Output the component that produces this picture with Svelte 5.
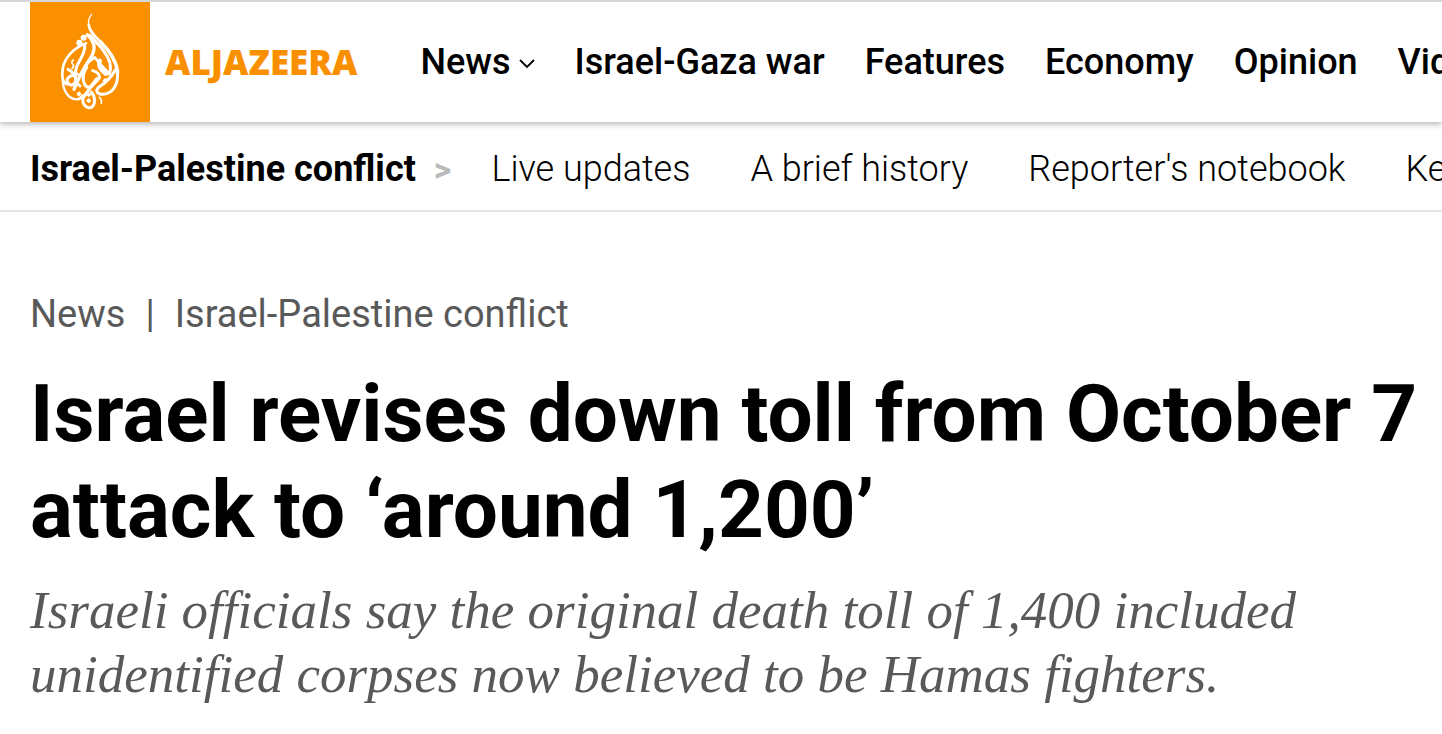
<script>
  const sections = ['Israel-Gaza war', 'Features', 'Economy', 'Opinion', 'Video'];
  const topics = ['Live updates', 'A brief history', "Reporter's notebook", 'Key'];
</script>

<header class="site-header">
  <a class="brand" href="#home" aria-label="Al Jazeera">
    <svg class="emblem" viewBox="-60 6 360 360" aria-hidden="true">
      <g fill="none" stroke="#fff" stroke-linecap="round" stroke-linejoin="round">
        <path stroke-width="4" d="M125 43Q113 56 116 76" />
        <path stroke-width="8" d="M116 74C118 96 136 108 154 128" />
        <path stroke-width="11" d="M152 126C180 154 199 182 203 216" />
        <path stroke-width="9" d="M202 214C206 252 190 280 160 283C142 284 134 272 146 262C168 248 186 228 196 210" />
        <path stroke-width="8" d="M108 130C76 142 42 170 38 208C34 240 42 254 56 252" />
        <path stroke-width="9" d="M54 208C68 214 84 236 74 250C64 262 48 250 52 238C56 226 66 228 82 222" />
        <path stroke-width="7" d="M38 240C40 278 58 298 82 298Q92 297 98 286" />
        <path stroke-width="9" d="M104 136C108 158 88 180 80 200C72 222 76 250 90 258" />
        <path stroke-width="10" d="M112 104C138 130 138 150 118 180C100 206 84 238 72 268" />
        <path stroke-width="9" d="M120 106C148 136 172 160 180 190Q184 206 178 222L150 192" />
        <path stroke-width="8" d="M116 186L134 172L144 184" />
        <path stroke-width="9" d="M110 202C94 226 98 252 112 262C124 264 130 248 140 236" />
        <path stroke-width="12" d="M150 182C142 198 154 212 168 222" />
        <path stroke-width="9" d="M128 212Q150 218 148 234C132 254 110 270 98 298C98 324 130 336 134 304Q134 288 124 276" />
        <path stroke-width="5" d="M70 180Q62 186 68 192Q74 198 66 206M148 292Q156 298 154 310" />
      </g>
      <g fill="#fff"><circle cx="101" cy="113" r="9" /><circle cx="88" cy="128" r="9" /><path d="M166 233l9 9-9 9-9-9zM87 274l8 8-8 8-8-8zM116 276l8 8-8 8-8-8zM116 294l8 8-8 8-8-8z" /></g>
    </svg>
    <span class="wordmark">ALJAZEERA</span>
  </a>
  <nav class="sections" aria-label="Sections">
    <button type="button" aria-haspopup="true">News
      <svg class="chevron" viewBox="0 0 16 10" aria-hidden="true"><path d="M1 1l7 7 7-7" fill="none" stroke="currentColor" stroke-width="1.8" /></svg>
    </button>
    {#each sections as section}<a href="#section">{section}</a>{/each}
  </nav>
</header>

<nav class="topics" aria-label="Topic">
  <a class="current" href="#conflict">Israel-Palestine conflict</a>
  <span class="arrow" aria-hidden="true">&gt;</span>
  {#each topics as topic}<a class="topic" href="#topic">{topic}</a>{/each}
</nav>

<main>
  <nav class="crumbs" aria-label="Breadcrumb">
    <a href="#news">News</a><span class="bar" aria-hidden="true">|</span><a href="#conflict">Israel-Palestine conflict</a>
  </nav>
  <h1>Israel revises down toll from October 7 attack to ‘around 1,200’</h1>
  <p>Israeli officials say the original death toll of 1,400 included unidentified corpses now believed to be Hamas fighters.</p>
</main>

<style>
  :global(body) {
    margin: 0;
    background: #fff;
    color: #000;
    font-family: Roboto, sans-serif;
    overflow-x: hidden;
  }
  a {
    color: inherit;
    text-decoration: none;
  }
  .site-header {
    position: relative;
    display: flex;
    align-items: center;
    padding-left: 30px;
    border-top: 2px solid #d5d8db;
    box-shadow: 0 2px 6px rgba(0, 0, 0, 0.3);
    overflow-x: clip;
  }
  .brand {
    display: flex;
    flex: none;
    align-items: center;
    gap: 15px;
    color: #fa9000;
  }
  .emblem {
    display: block;
    width: 120px;
    height: 120px;
    background: #fa9000;
  }
  .wordmark {
    font: 800 35px/48px "Open Sans", sans-serif;
  }
  .sections {
    display: flex;
    flex: none;
    gap: 40px;
    margin-left: 63px;
    font-size: 36px;
    font-weight: 500;
    line-height: 48px;
    white-space: nowrap;
  }
  button {
    display: flex;
    align-items: center;
    gap: 8px;
    padding: 0;
    border: 0;
    background: none;
    color: inherit;
    font: inherit;
  }
  .chevron {
    width: 16px;
    height: 10px;
    margin-top: 4px;
  }
  .topics {
    display: flex;
    align-items: center;
    padding: 23px 0 17px 30px;
    border-bottom: 2px solid #e5e5e5;
    font-size: 36px;
    font-weight: 300;
    line-height: 48px;
    white-space: nowrap;
    overflow: hidden;
  }
  .current {
    font-weight: 700;
  }
  .arrow {
    margin: 0 40px 0 18px;
    color: #bbb;
    font-size: 34px;
    font-weight: 700;
  }
  .topic {
    margin-right: 60px;
  }
  main {
    padding: 76px 24px 24px 30px;
  }
  .crumbs {
    display: flex;
    gap: 20px;
    color: #595959;
    font-size: 38px;
    line-height: 52px;
  }
  h1 {
    margin: 26px 0 0;
    font-size: 80px;
    font-weight: 700;
    line-height: 96px;
  }
  p {
    margin: 20px 0 0;
    color: #595959;
    font: italic 53px/64px Georgia, "Liberation Serif", serif;
  }
</style>
